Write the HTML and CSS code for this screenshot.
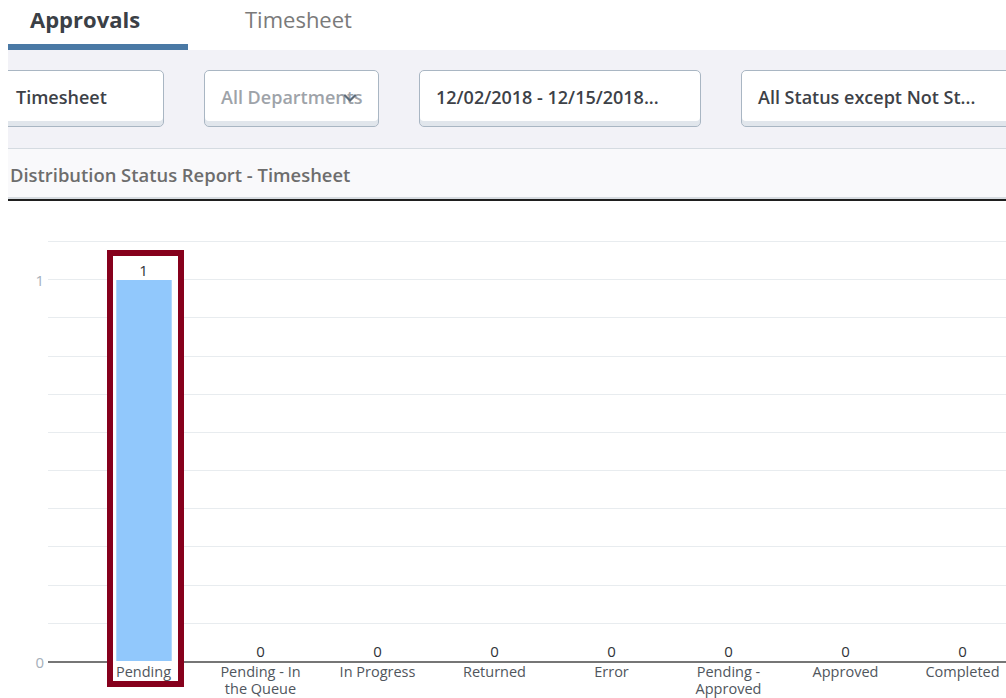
FILE: index.html
```html
<!DOCTYPE html>
<html lang="en">
<head>
<meta charset="utf-8">
<title>Distribution Status Report</title>
<link rel="stylesheet" href="styles.css">
</head>
<body>
<div class="page">
  <nav class="tabs">
    <div class="tab active">Approvals</div>
    <div class="tab">Timesheet</div>
  </nav>

  <section class="filters">
    <div class="filter-row">
      <div class="field f-type">Timesheet</div>
      <div class="field f-dept muted">All Departments
        <svg class="chev" width="14" height="12" viewBox="0 0 14 12" aria-hidden="true">
          <path d="M2 3.5 L7 8.5 L12 3.5" fill="none" stroke="#5d6b79" stroke-width="2.2" stroke-linecap="round" stroke-linejoin="round"/>
        </svg>
      </div>
      <div class="field f-date">12/02/2018 - 12/15/2018...</div>
      <div class="field f-status">All Status except Not St...</div>
    </div>
  </section>

  <header class="report-title">Distribution Status Report - Timesheet</header>

  <section class="chart">
    <div class="plot">
      <div class="row"><span class="tick"></span><span class="line"></span></div>
      <div class="row"><span class="tick">1</span><span class="line"></span></div>
      <div class="row"><span class="tick"></span><span class="line"></span></div>
      <div class="row"><span class="tick"></span><span class="line"></span></div>
      <div class="row"><span class="tick"></span><span class="line"></span></div>
      <div class="row"><span class="tick"></span><span class="line"></span></div>
      <div class="row"><span class="tick"></span><span class="line"></span></div>
      <div class="row"><span class="tick"></span><span class="line"></span></div>
      <div class="row"><span class="tick"></span><span class="line"></span></div>
      <div class="row"><span class="tick"></span><span class="line"></span></div>
      <div class="row"><span class="tick"></span><span class="line"></span></div>
      <div class="row axis"><span class="tick">0</span><span class="line"></span></div>
    </div>

    <div class="highlight"></div>

    <div class="series">
      <div class="col">
        <div class="stack"><span class="value">1</span><div class="bar" style="height:381px"></div></div>
        <div class="cat">Pending</div>
      </div>
      <div class="col">
        <div class="stack"><span class="value">0</span><div class="bar" style="height:0"></div></div>
        <div class="cat">Pending - In the Queue</div>
      </div>
      <div class="col">
        <div class="stack"><span class="value">0</span><div class="bar" style="height:0"></div></div>
        <div class="cat">In Progress</div>
      </div>
      <div class="col">
        <div class="stack"><span class="value">0</span><div class="bar" style="height:0"></div></div>
        <div class="cat">Returned</div>
      </div>
      <div class="col">
        <div class="stack"><span class="value">0</span><div class="bar" style="height:0"></div></div>
        <div class="cat">Error</div>
      </div>
      <div class="col">
        <div class="stack"><span class="value">0</span><div class="bar" style="height:0"></div></div>
        <div class="cat">Pending - Approved</div>
      </div>
      <div class="col">
        <div class="stack"><span class="value">0</span><div class="bar" style="height:0"></div></div>
        <div class="cat">Approved</div>
      </div>
      <div class="col">
        <div class="stack"><span class="value">0</span><div class="bar" style="height:0"></div></div>
        <div class="cat">Completed</div>
      </div>
    </div>
  </section>
</div>
</body>
</html>
```

FILE: styles.css
```css
* { box-sizing: border-box; }

html, body {
  margin: 0;
  padding: 0;
  background: #ffffff;
  font-family: "Open Sans", "Liberation Sans", sans-serif;
}

.page {
  margin-left: 8px;
  width: 998px;
  height: 698px;
  overflow: hidden;
}

/* ---- tabs ---- */
.tabs {
  display: flex;
  height: 50px;
}

.tab {
  height: 50px;
  padding-top: 4px;
  line-height: 30px;
  font-size: 22px;
  color: #7a7a7a;
  white-space: nowrap;
}

.tab.active {
  width: 180px;
  padding-left: 22px;
  font-weight: 700;
  color: #3b4046;
  border-bottom: 6px solid #4a79a5;
}

.tab + .tab {
  margin-left: 57px;
}

/* ---- filter bar ---- */
.filters {
  background: #f2f2f7;
  padding: 20px 0 21px;
  border-bottom: 1px solid #d5dbe1;
}

.filter-row {
  display: flex;
  gap: 40px;
  margin-left: -9px;
}

.field {
  position: relative;
  flex-shrink: 0;
  height: 57px;
  display: flex;
  align-items: center;
  padding: 0 0 4px 16px;
  background: #ffffff;
  border: 1px solid #a9b6c3;
  border-radius: 5px;
  box-shadow: inset 0 -5px 0 #e1e6ec;
  font-size: 18px;
  font-weight: 600;
  color: #3d4147;
  white-space: nowrap;
  overflow: hidden;
}

.field.muted { color: #9ea3a9; }

.f-type { width: 165px; }
.f-dept { width: 175px; }
.f-date { width: 282px; }
.f-status { width: 290px; }

.chev {
  position: absolute;
  right: 21px;
  top: 21px;
}

/* ---- report title ---- */
.report-title {
  height: 52px;
  display: flex;
  align-items: center;
  padding-left: 2px;
  background: #f9f9fb;
  box-shadow: inset 0 -2px 0 #d7dce1;
  border-bottom: 2px solid #1f1f1f;
  font-size: 18.4px;
  font-weight: 600;
  color: #6d6d6d;
}

/* ---- chart ---- */
.chart {
  position: relative;
  height: 497px;
  padding-top: 40px;
}

.plot {
  height: 422px;
  display: flex;
  flex-direction: column;
  justify-content: space-between;
}

.row {
  display: flex;
  align-items: center;
  height: 1px;
}

.row.axis { height: 2px; }

.tick {
  width: 40px;
  padding-right: 4px;
  text-align: right;
  font-size: 15px;
  line-height: 16px;
  color: #a5afba;
}

.line {
  flex: 1;
  height: 1px;
  background: #e8ecef;
}

.row.axis .line {
  height: 2px;
  background: #767676;
}

.highlight {
  position: absolute;
  left: 99px;
  top: 49px;
  width: 77px;
  height: 437px;
  background: #ffffff;
  border: 6px solid #86001c;
  z-index: 1;
}

.series {
  position: absolute;
  left: 77px;
  top: 0;
  display: flex;
  z-index: 2;
}

.col {
  width: 117px;
  display: flex;
  flex-direction: column;
  align-items: center;
}

.stack {
  height: 460px;
  flex-shrink: 0;
  display: flex;
  flex-direction: column;
  justify-content: flex-end;
  align-items: center;
}

.value {
  font-size: 15px;
  line-height: 16px;
  margin-bottom: 2px;
  color: #2f3338;
}

.bar {
  width: 56px;
  background: #91c8fc;
  border-left: 1px solid #b0d8fd;
  border-right: 1px solid #b0d8fd;
}

.cat {
  max-width: 96px;
  padding-top: 2px;
  text-align: center;
  font-size: 14.5px;
  line-height: 17px;
  color: #50565d;
}
```
